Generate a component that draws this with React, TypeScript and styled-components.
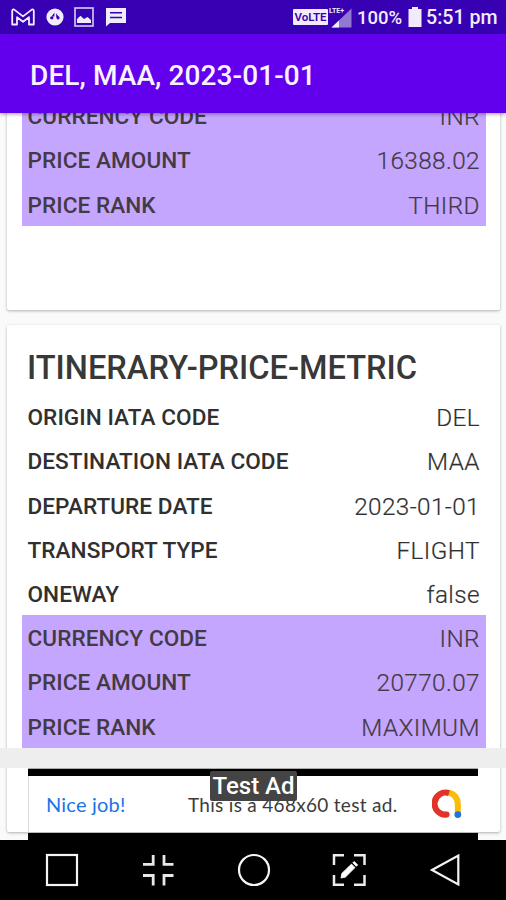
import React from 'react';
import styled, { createGlobalStyle } from 'styled-components';

const GlobalStyle = createGlobalStyle`
  * { box-sizing: border-box; }
  body { margin: 0; background: #fafafa; font-family: Roboto, "Liberation Sans", sans-serif; }
`;

const Screen = styled.div`
  width: 506px;
  height: 900px;
  display: flex;
  flex-direction: column;
  overflow: hidden;
  background: #fafafa;
`;

const StatusBar = styled.div`
  flex: none;
  height: 34px;
  display: flex;
  align-items: center;
  justify-content: space-between;
  padding: 0 8px 0 11px;
  background: #3700b3;
  color: #f1ecfb;
`;

const StatusGroup = styled.div<{ $gap: number }>`
  display: flex;
  align-items: center;
  gap: ${(p) => p.$gap}px;
  height: 34px;
`;

const StatusText = styled.span<{ $width: number; $size: number }>`
  width: ${(p) => p.$width}px;
  font-size: ${(p) => p.$size}px;
  line-height: 34px;
  padding: 2px 0 0 4px;
  font-weight: 500;
  white-space: nowrap;
`;

const VolteBadge = styled.span`
  width: 35px;
  height: 16px;
  border-radius: 1px;
  background: #f1ecfb;
  color: #3700b3;
  font-size: 11.5px;
  font-weight: 600;
  line-height: 17px;
  text-align: center;
`;

const AppBar = styled.header`
  flex: none;
  position: relative;
  z-index: 2;
  height: 79px;
  display: flex;
  align-items: center;
  padding: 4px 30px 0;
  background: #6200ee;
  box-shadow: 0 1px 4px rgba(0, 0, 0, 0.4);
`;

const AppTitle = styled.h1`
  margin: 0;
  color: #f8f3ff;
  font-size: 28px;
  font-weight: 500;
  letter-spacing: 0.1px;
  white-space: nowrap;
`;

const Content = styled.main`
  flex: 1;
  min-height: 0;
  position: relative;
  overflow: hidden;
  display: flex;
  flex-direction: column;
  justify-content: flex-end;
  gap: 15px;
  padding: 0 6px 8px 7px;
`;

const Card = styled.section`
  flex: none;
  background: #fff;
  border-radius: 2px;
  padding: 22px 14.5px 84.4px 15px;
  box-shadow: 0 1px 3px rgba(0, 0, 0, 0.3);
`;

const CardTitle = styled.h2`
  margin: 0;
  padding-left: 5px;
  height: 47px;
  line-height: 42px;
  font-size: 32.6px;
  font-weight: 500;
  color: #383838;
  white-space: nowrap;
`;

const Row = styled.div<{ $marked?: boolean }>`
  height: 44.2px;
  display: flex;
  align-items: center;
  justify-content: space-between;
  padding: 3px 6px 0 5.5px;
  background: ${(p) => (p.$marked ? '#c4a6ff' : 'transparent')};
  color: ${(p) => (p.$marked ? '#443a44' : '#303030')};
`;

const Label = styled.span`
  font-size: 22.6px;
  font-weight: 500;
  letter-spacing: 0.05px;
  white-space: nowrap;
`;

const Value = styled.span`
  font-size: 24.3px;
  font-weight: 300;
  letter-spacing: 0.4px;
  margin-right: -0.4px;
  -webkit-text-stroke: 0.2px currentColor;
  white-space: nowrap;
`;

const AdLayer = styled.aside`
  position: absolute;
  left: 0;
  right: 0;
  bottom: 0;
  height: 92px;
  display: flex;
  flex-direction: column;
  align-items: center;
`;

const Band = styled.div`
  width: 100%;
  height: 20px;
  background: #eee;
`;

const AdFrame = styled.div`
  position: relative;
  flex: 1;
  width: 450px;
  padding: 7px 0;
  background: #000;
  border-top: 1px solid #aaa;
`;

const AdBanner = styled.div`
  height: 100%;
  display: flex;
  align-items: center;
  padding: 0 16px 0 17px;
  background: #fff;
  border-left: 1px solid #ddd;
  border-bottom: 1px solid #bbb;
  font-family: Lato, sans-serif;
`;

const AdHeadline = styled.span`
  width: 142px;
  color: #1a73e8;
  font-size: 20px;
  letter-spacing: 0.2px;
  white-space: nowrap;
`;

const AdCopy = styled.span`
  width: 244px;
  color: #3c3c3c;
  font-size: 19px;
  letter-spacing: 0.3px;
  white-space: nowrap;
`;

const AdTag = styled.span`
  position: absolute;
  top: 2px;
  left: 182px;
  width: 87px;
  height: 30px;
  border-radius: 2px;
  background: #444;
  color: #fff;
  font-size: 24px;
  font-weight: 500;
  line-height: 31px;
  text-align: center;
  white-space: nowrap;
`;

const NavBar = styled.nav`
  flex: none;
  height: 60px;
  display: flex;
  align-items: center;
  justify-content: space-between;
  padding: 0 43px 0 44px;
  background: #000;
`;

type Field = [label: string, value: string];

const itinerary: Field[] = [
  ['ORIGIN IATA CODE', 'DEL'],
  ['DESTINATION IATA CODE', 'MAA'],
  ['DEPARTURE DATE', '2023-01-01'],
  ['TRANSPORT TYPE', 'FLIGHT'],
  ['ONEWAY', 'false'],
];

type MetricProps = { title?: string; fields?: Field[]; amount: string; rank: string };

function MetricCard({ title, fields = [], amount, rank }: MetricProps) {
  const price: Field[] = [
    ['CURRENCY CODE', 'INR'],
    ['PRICE AMOUNT', amount],
    ['PRICE RANK', rank],
  ];
  return (
    <Card>
      {title && <CardTitle>{title}</CardTitle>}
      {fields.map(([label, value]) => (
        <Row key={label}>
          <Label>{label}</Label>
          <Value>{value}</Value>
        </Row>
      ))}
      {price.map(([label, value]) => (
        <Row key={label} $marked>
          <Label>{label}</Label>
          <Value>{value}</Value>
        </Row>
      ))}
    </Card>
  );
}

const ink = '#f1ecfb';

function MailIcon() {
  return (
    <svg width="24" height="18" viewBox="0 0 24 18" fill="none" stroke={ink} strokeWidth="1.8" strokeLinejoin="round">
      <path d="M1.2 16.5V3.2Q1.2 1 3.2 1.6L12 8.4L20.8 1.6Q22.8 1 22.8 3.2V16.5H18V9.2L12 13.8L6 9.2V16.5Z" />
    </svg>
  );
}

function BallIcon() {
  return (
    <svg width="18" height="18" viewBox="0 0 18 18">
      <circle cx="9" cy="9" r="8.6" fill={ink} />
      <path d="M8.4 4.5V8.6H5.6Z M10.2 5.2L13 9.2H10.2Z" fill="#3700b3" />
      <circle cx="5.8" cy="9.8" r="1.6" fill="#3700b3" />
      <circle cx="12" cy="9.8" r="1.6" fill="#3700b3" />
    </svg>
  );
}

function ImageIcon() {
  return (
    <svg width="20" height="20" viewBox="0 0 20 20">
      <rect x="1" y="1" width="18" height="18" fill="none" stroke="#cfc1ee" strokeWidth="1.7" />
      <path d="M3 16V12L6.5 8.8L10 12L13.5 10L17 13V16Z" fill={ink} />
    </svg>
  );
}

function MessageIcon() {
  return (
    <svg width="22" height="20" viewBox="0 0 22 20">
      <path d="M1 1H21V16H5L1 19.5Z" fill={ink} />
      <path d="M5 5.8H17M5 10.5H17" stroke="#3700b3" strokeWidth="1.5" />
    </svg>
  );
}

function SignalIcon() {
  return (
    <svg width="25" height="24" viewBox="0 0 25 24">
      <path d="M23.5 3.5V22.5H3.5Z" fill="#9277d3" />
      <path d="M11 15.5V22.5H3.5Z" fill={ink} />
      <text x="1" y="7.5" fontSize="7.5" fontWeight="700" fill={ink} textLength="15" lengthAdjust="spacingAndGlyphs">LTE+</text>
    </svg>
  );
}

function BatteryIcon() {
  return (
    <svg width="14" height="20" viewBox="0 0 14 20">
      <path d="M4 0H10V2H13.5V20H0.5V2H4Z" fill={ink} />
    </svg>
  );
}

function AdLogo() {
  return (
    <svg width="30" height="30" viewBox="0 0 30 30" fill="none" strokeWidth="6">
      <path d="M15 3.8C22 3.8 25.8 9 25.8 15V24" stroke="#fbbc04" />
      <path d="M17 4.2A11 11 0 1 0 14.6 25.6" stroke="#e2332b" />
      <circle cx="14.6" cy="25.6" r="3" fill="#e2332b" />
      <circle cx="25.8" cy="25.6" r="3.4" fill="#1a73e8" />
    </svg>
  );
}

function SquareIcon() {
  return (
    <svg width="36" height="36" viewBox="0 0 36 36">
      <rect x="3" y="3" width="30" height="30" fill="none" stroke="#f4f4f4" strokeWidth="2.2" />
    </svg>
  );
}

function CollapseIcon() {
  return (
    <svg width="36" height="36" viewBox="0 0 36 36" fill="none" stroke="#e8e8e8" strokeWidth="2.8">
      <path d="M3 12.3H13.2V3M24 3V12.3H33.5M3 23.5H13.2V33.5M24 33.5V23.5H33.5" />
    </svg>
  );
}

function CircleIcon() {
  return (
    <svg width="36" height="36" viewBox="0 0 36 36">
      <circle cx="18" cy="18" r="15" fill="none" stroke="#f4f4f4" strokeWidth="2.2" />
    </svg>
  );
}

function CaptureIcon() {
  return (
    <svg width="36" height="36" viewBox="0 0 36 36" fill="none" stroke="#ececec" strokeWidth="2.5">
      <path d="M3 13V3.3H13M23 3.3H33.5V13M33.5 23V32.8H23M13 32.8H3V23" />
      <path d="M10 26L10.8 21.4L20.5 12.1L24 15.6L14.3 25.2Z M21.8 10.8L23.2 9.4L26.7 12.9L25.3 14.3Z" fill="#fff" stroke="#fff" strokeWidth="0.8" />
    </svg>
  );
}

function BackIcon() {
  return (
    <svg width="36" height="36" viewBox="0 0 36 36">
      <path d="M5 18L31.3 3.5V32.5Z" fill="none" stroke="#f4f4f4" strokeWidth="2.2" />
    </svg>
  );
}

export default function App() {
  return (
    <Screen>
      <GlobalStyle />
      <StatusBar>
        <StatusGroup $gap={10.5}>
          <MailIcon />
          <BallIcon />
          <ImageIcon />
          <MessageIcon />
        </StatusGroup>
        <StatusGroup $gap={0}>
          <VolteBadge>VoLTE</VolteBadge>
          <SignalIcon />
          <StatusText $width={55} $size={18.5}>100%</StatusText>
          <BatteryIcon />
          <StatusText $width={76} $size={19.6}>5:51 pm</StatusText>
        </StatusGroup>
      </StatusBar>
      <AppBar>
        <AppTitle>DEL, MAA, 2023-01-01</AppTitle>
      </AppBar>
      <Content>
        <MetricCard amount="16388.02" rank="THIRD" />
        <MetricCard title="ITINERARY-PRICE-METRIC" fields={itinerary} amount="20770.07" rank="MAXIMUM" />
        <AdLayer>
          <Band />
          <AdFrame>
            <AdBanner>
              <AdHeadline>Nice job!</AdHeadline>
              <AdCopy>This is a 468x60 test ad.</AdCopy>
              <AdLogo />
            </AdBanner>
            <AdTag>Test Ad</AdTag>
          </AdFrame>
        </AdLayer>
      </Content>
      <NavBar>
        <SquareIcon />
        <CollapseIcon />
        <CircleIcon />
        <CaptureIcon />
        <BackIcon />
      </NavBar>
    </Screen>
  );
}
